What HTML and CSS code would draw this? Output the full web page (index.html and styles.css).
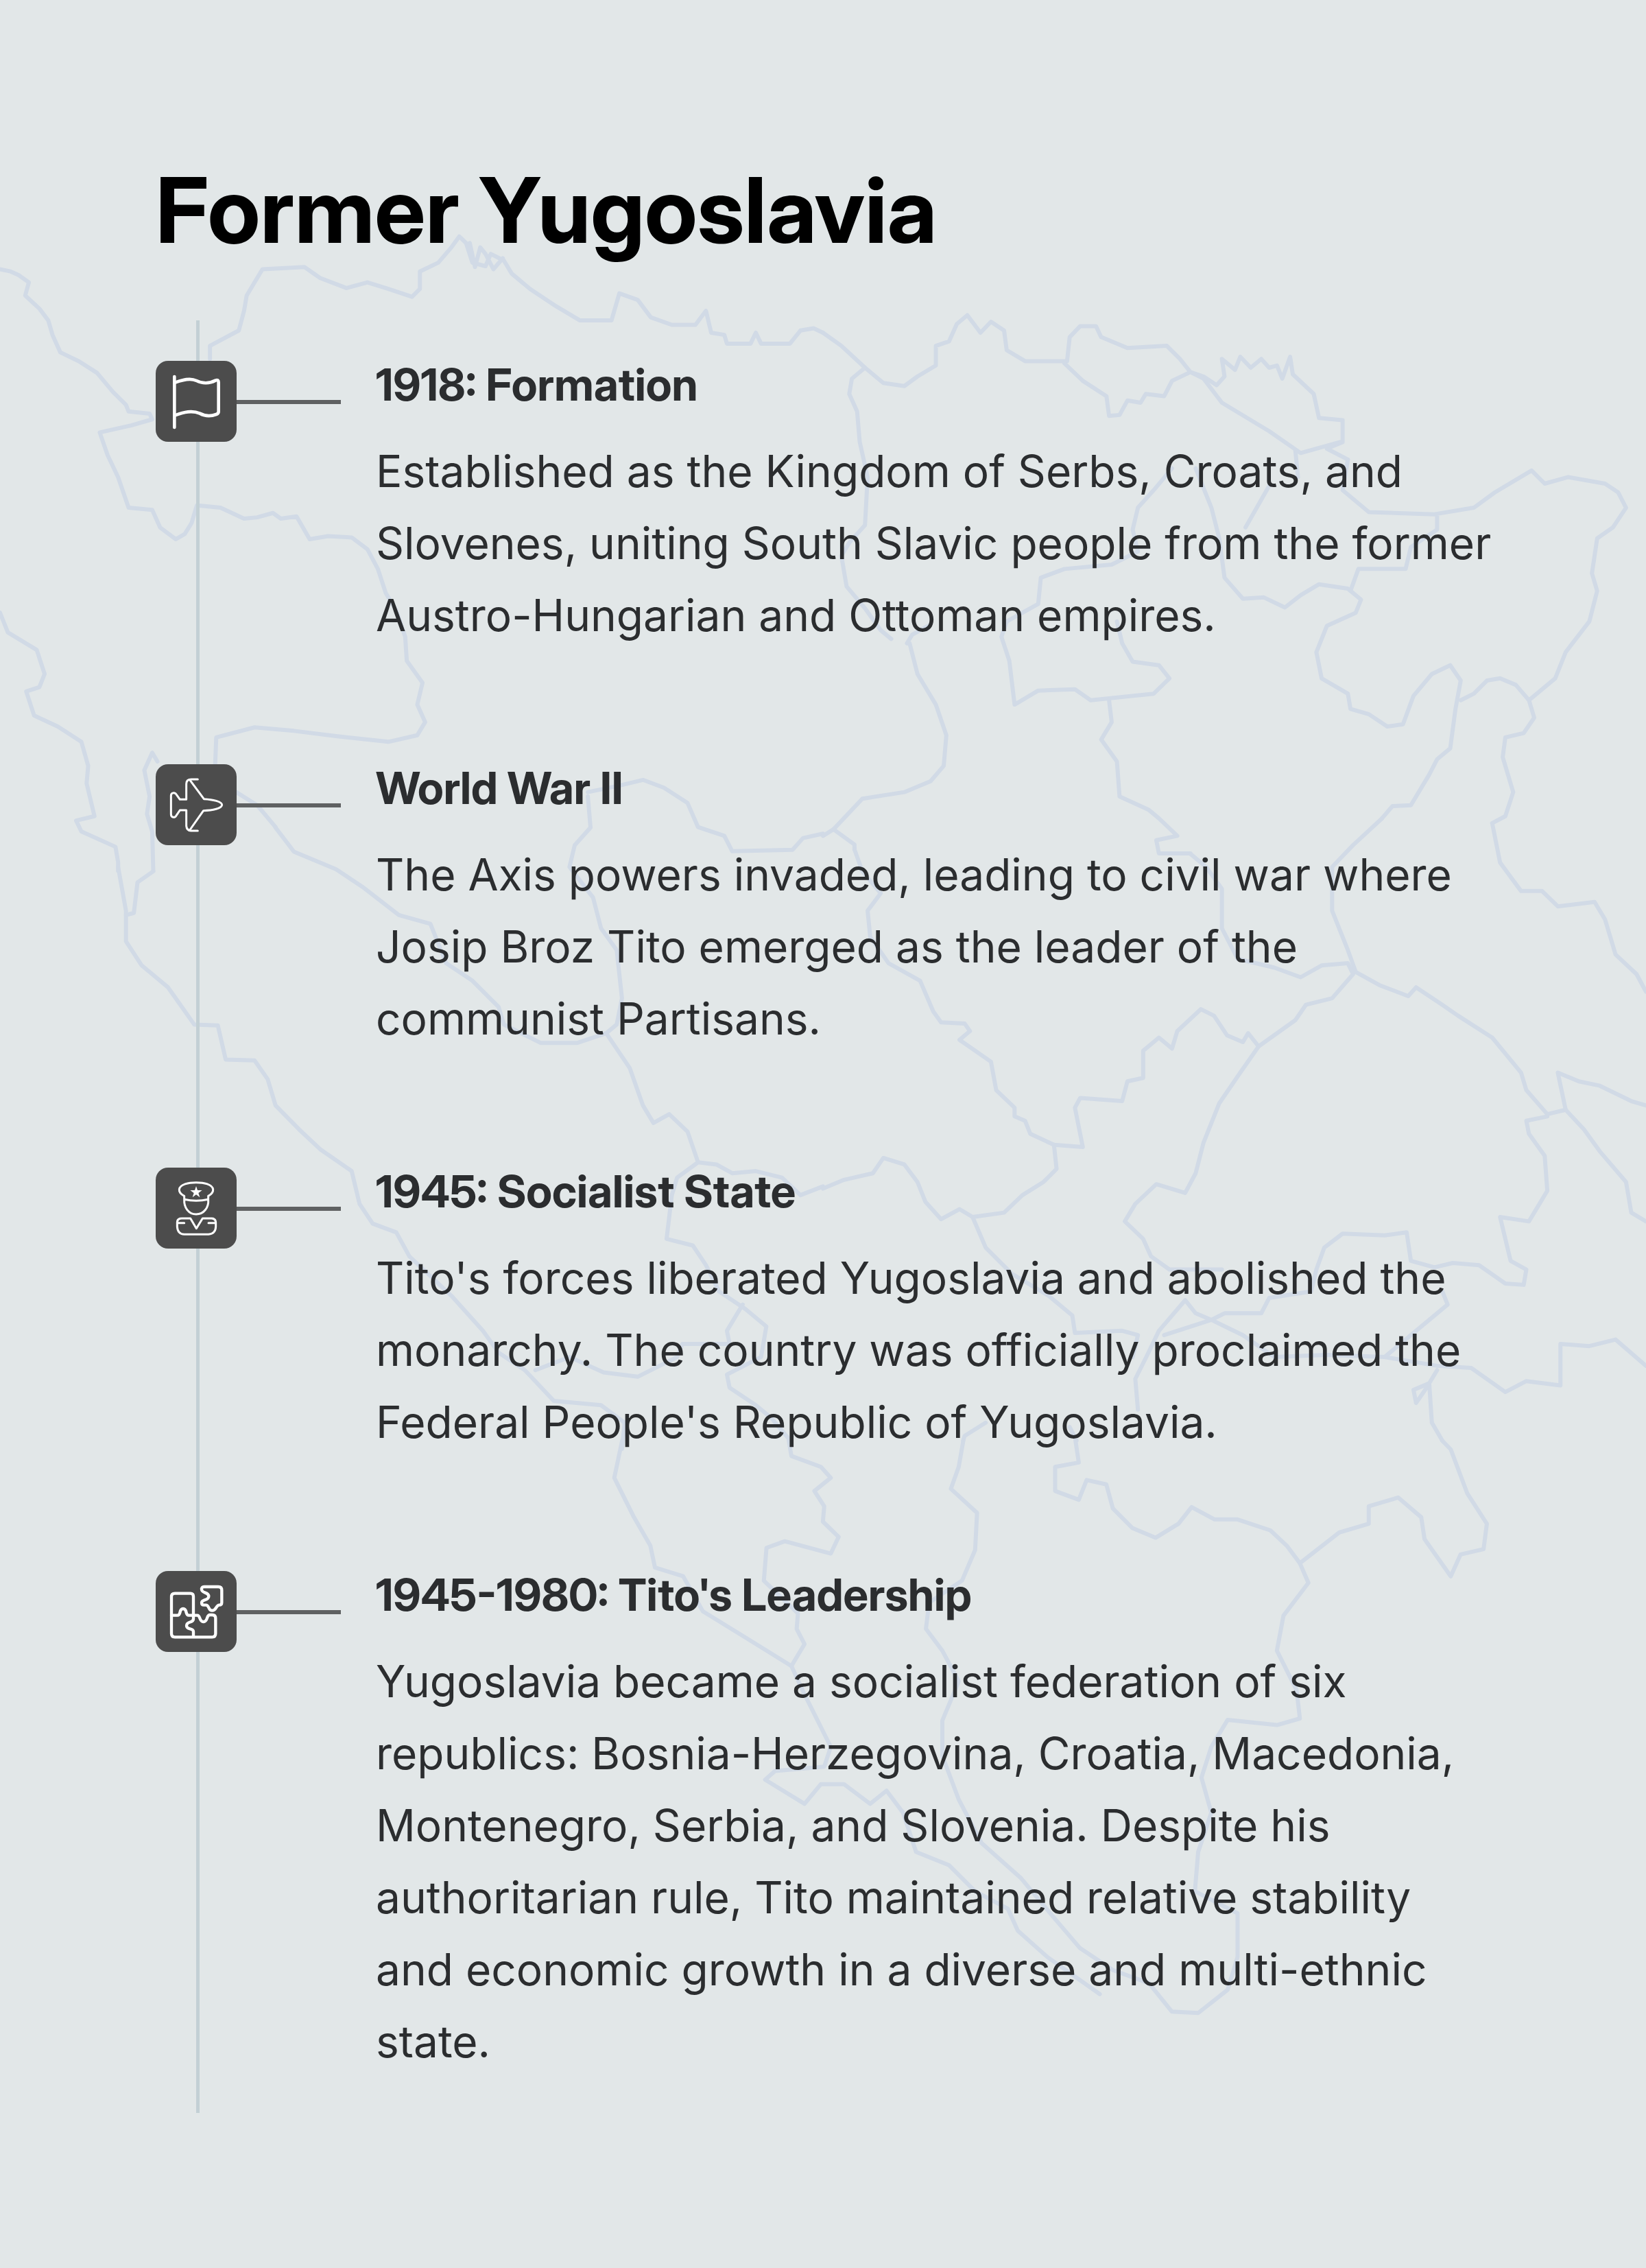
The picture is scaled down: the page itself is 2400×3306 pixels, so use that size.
FILE: index.html
```html
<!DOCTYPE html>
<html lang="en">
<head>
<meta charset="utf-8">
<meta name="viewport" content="width=device-width, initial-scale=1">
<title>Former Yugoslavia</title>
<link rel="stylesheet" href="styles.css">
</head>
<body>
<main class="page">
  <svg class="map" viewBox="0 0 2400 3306" preserveAspectRatio="xMidYMin slice" aria-hidden="true">
    <!-- north-west -->
    <g transform="translate(0 300) scale(.7653 .6378)">
      <path d="M0 145L20 150L35 158L55 175L48 205L75 235L92 262L100 295L115 335L150 355L185 382L215 425L240 455L245 470L285 475L290 488L250 502L190 518L205 570L225 620L245 690L290 695L305 735L335 762L352 750L365 725L375 685"/>
      <path d="M400 350L400 320L455 285L465 240L470 205L500 145L580 140L610 165L660 188L700 175L740 190L785 208L800 190L800 150L835 130L860 95L875 70L888 85L900 130L925 138L935 110L960 125L975 155L1010 190L1060 230L1105 262L1165 262L1180 200L1215 215L1240 255L1280 272L1325 272L1345 240L1355 290L1380 295L1385 315L1430 315L1440 290L1450 315L1505 315L1525 285L1550 280L1568 290M895 85L905 140L915 95L925 110L940 145L958 120"/>
      <path d="M380 685L420 690L465 715L490 712L520 702L535 715L565 710L590 762L625 755L670 758L700 785L720 830L735 885L755 925L772 985L775 1040L805 1090L795 1140L810 1180L795 1210L740 1225L640 1212L560 1200L485 1192L412 1215L410 1275"/>
      <path d="M0 930L15 975L70 1015L85 1070L75 1100L50 1110L65 1165L110 1190L155 1225L168 1280L165 1320L180 1395L145 1405L155 1430L220 1465L225 1500L225 1520"/>
      <path d="M300 1270L290 1250L275 1290L285 1350L280 1390L290 1430L292 1520M450 1340L490 1370L525 1420"/>
      <path d="M1120 1350L1125 1420M1120 1340L1180 1325L1225 1312L1265 1330L1310 1365L1330 1420L1380 1440L1395 1475L1510 1472L1530 1445L1568 1435"/>
    </g>
    <!-- north-east -->
    <g transform="translate(1200 300) scale(.7653 .6378)">
      <path d="M0 290L35 320L80 370L115 405L155 412L180 390L215 365L215 320L240 310L255 270L275 250L300 290L320 265L345 285L350 330L385 355L465 355L470 300L490 275L520 275L530 300L580 325L655 320L680 350L700 380L725 390L750 410L765 390L760 350L785 375L795 345L815 370L835 350L850 370L865 365L875 395L890 345L895 385L935 430L945 485L990 490L990 540L960 555L1000 580"/>
      <path d="M460 360L495 400L540 435L545 480L565 478L580 445L605 450L615 430L650 435L665 400L700 380L725 395L760 450L850 515L910 565L985 540"/>
      <path d="M80 370L55 395L50 430L65 470L70 540L85 620L80 730L50 770L35 800L45 870L80 920L110 970L130 990M160 1000L170 980L200 960M165 1000L180 1070L215 1140L235 1210L230 1280L205 1315L155 1340L75 1355L20 1425L0 1440"/>
      <path d="M665 600L630 650L600 690L590 740L600 790L550 820L460 830L415 850L410 910L350 950L340 985L355 1040L365 1140L410 1108L480 1105L510 1130L630 1115L660 1080L640 1050L590 1042L570 1000L560 950"/>
      <path d="M710 600L740 690L755 760L765 850L800 898L840 895L880 918L910 890L945 865L1000 875L1025 900L1015 930L960 960L940 1020L950 1080L1000 1115L1005 1150L1040 1162L1075 1190L1105 1185L1125 1120L1160 1070L1195 1050L1215 1085L1205 1150L1195 1240L1170 1265L1155 1300L1120 1370L1085 1372L1065 1400"/>
      <path d="M850 640L805 735M900 560L905 620M1000 580L990 650L1040 700L1165 705L1240 690L1280 655L1350 605L1375 635L1420 620L1490 635L1515 655L1530 690L1505 735L1475 760L1465 840L1475 880L1460 950L1415 1020L1395 1080L1345 1130L1355 1170L1335 1205L1300 1215L1295 1260L1315 1340L1300 1395L1275 1411M1215 1130L1240 1115L1265 1085L1290 1080L1320 1095L1345 1130M1170 705L1170 740L1120 780L1110 830L1020 830L1005 880"/>
      <path d="M545 1130L550 1180L530 1220L560 1270L565 1350L620 1380L640 1400L675 1440L635 1450L640 1480L700 1480M20 1425L60 1460L60 1471"/>
    </g>
    <!-- centre-west -->
    <g transform="translate(0 1200) scale(.7653 .6378)">
      <path d="M225 100L240 200L240 270L270 325L320 375L370 460L415 462L430 540L485 542L510 585L525 645L570 700L610 745L670 795L685 870L710 915L755 935L780 990L860 1080L920 1160L950 1210L1000 1250L1055 1320L1145 1330L1190 1370L1185 1430"/>
      <path d="M292 110L262 135L255 205L240 210M525 10L560 65L640 105L690 145L760 210L820 230L850 320L900 360L950 420L960 460L1030 502L1100 502L1155 480L1175 460L1185 400L1175 290L1145 240L1130 170L1085 100L1095 50L1125 10"/>
      <path d="M1155 480L1200 560L1225 645L1245 685L1275 665L1310 705L1330 775L1365 780L1395 800L1440 795L1490 810L1525 850L1568 830M1330 775L1290 810L1280 850L1275 900L1270 950L1320 965L1345 1010L1370 1070L1420 1110L1460 1150L1450 1220L1385 1260L1390 1290L1440 1330L1470 1360L1505 1410M1415 1100L1385 1160L1390 1190L1300 1190L1290 1220L1215 1265L1150 1255L1085 1220L1020 1250"/>
    </g>
    <!-- centre-east -->
    <g transform="translate(1200 1200) scale(.7653 .6378)">
      <path d="M60 60L75 110L110 160L85 200L90 260L125 320L185 360L210 430L225 455L270 458L280 475L260 495L320 545L330 610L365 650L365 670L385 680L395 710L440 735L495 740L480 650L490 628L570 635L580 590L610 582L610 520L640 490L665 515L675 475L720 425L745 440L770 485L800 500L810 480L830 510L900 450L920 415L970 400L1010 345L1000 320L950 325L910 352L860 330L790 310L760 240L760 150L730 100L700 70"/>
      <path d="M1065 -11L1010 50L970 100L970 200L1000 290L1015 340L1060 370L1115 395L1130 375L1180 415L1210 440L1275 490L1330 570L1340 610L1380 665L1415 655L1400 570L1440 590L1480 600L1540 635L1568 645M1275 0L1290 90L1330 155L1370 155L1400 190L1470 180L1490 220L1510 300L1550 345L1568 385"/>
      <path d="M1380 670L1340 680L1345 710L1375 760L1380 840L1345 910L1290 900L1310 1000L1340 1020L1335 1055L1300 1052L1250 1010L1200 1005L1165 1015L1120 1000L1112 935L1070 942L990 938L955 970L940 1020L930 1070L850 1085L835 1120L765 1120L740 1135L710 1120L690 1090L640 1160L620 1210L595 1270L600 1340M1415 655L1450 700L1480 750L1530 820L1540 890L1568 910"/>
      <path d="M830 510L795 570L755 640L725 730L710 800L690 845L635 825L595 870L575 910L610 950L625 990L660 1020L760 1020M440 735L445 790L420 820L380 850L345 890L285 900L260 882L225 905L195 865L180 820L155 780L115 765L95 800L40 815L0 835M285 900L310 970L360 1030L430 1080L475 1125L480 1165L570 1160L600 1170L590 1220M650 1170L740 1135L800 1170L860 1220L960 1215L1070 1220L1130 1160L1190 1100L1180 1070M1070 1220L1170 1240L1235 1245L1300 1300L1340 1275L1405 1285L1405 1190L1460 1195L1510 1180L1568 1240M1170 1250L1150 1290L1130 1325L1125 1295L1155 1280L1160 1370L1180 1411"/>
      <path d="M310 1370L270 1400L267 1411M470 1380L483 1411"/>
    </g>
    <!-- south -->
    <g transform="translate(800 2100) scale(.9566 .6378)">
      <path d="M112 0L100 85L130 175L155 240L162 290L205 310L235 390L300 450L370 515L390 580L410 640L430 700L420 745L345 755L330 775L390 830L415 785L450 785L490 830L515 800L540 850L560 940L610 970L650 1030L700 1070L715 1120L760 1180L840 1265"/>
      <path d="M366 0L370 35L415 60L430 85L405 115L420 150L418 185L442 220L430 258L360 230L332 245L328 320L380 395L378 430L390 465L370 515"/>
      <path d="M632 0L625 60L613 110L653 165L650 250L630 320L580 370L575 430L600 480L625 550L600 640L600 720L625 820L660 920L720 1000L770 1090L810 1160L860 1210L915 1240L950 1305L990 1308L1035 1255L1050 1180L1050 1080L985 1030L990 940L1010 850L995 770L1010 700L1035 638L1110 650L1145 635L1140 570L1110 480L1120 400L1158 325L1145 280L1125 240L1100 205L1050 180L1015 180L980 152L960 190L925 222L890 200L860 155L850 100L820 90L808 135L772 115L772 60L808 50L803 0"/>
      <path d="M1145 280L1205 210L1250 190L1250 150L1295 130L1330 175L1335 225L1375 310L1390 260L1425 248L1430 190L1400 120L1375 20L1362 0"/>
    </g>
  </svg>

  <h1 class="title">Former Yugoslavia</h1>

  <ol class="timeline">
    <li class="event">
      <svg class="tile" viewBox="81 78 354 354" aria-hidden="true">
        <g stroke-width="14">
          <path d="M163 147V369"/>
          <path d="M166 173C198 161 232 151 260 165C285 178 316 178 342 164Q356 158 356 172V298Q357 308 346 312C320 322 298 321 274 308C240 293 205 302 166 316"/>
        </g>
      </svg>
      <div class="connector"></div>
      <div class="copy">
        <h2 class="heading">1918: Formation</h2>
        <p class="text">Established as the Kingdom of Serbs, Croats, and Slovenes, uniting South Slavic people from the former Austro-Hungarian and Ottoman empires.</p>
      </div>
    </li>
    <li class="event">
      <svg class="tile" viewBox="81 72 354 354" aria-hidden="true">
        <g stroke-width="9">
          <path d="M265 138H237Q215 138 215 158V226H187L172 205C165 193 148 196 148 209V290C148 306 165 309 172 295L187 273H215V342Q217 362 235 363H265"/>
          <path d="M232 143L292 224C330 226 371 235 371 250C371 265 330 274 290 275L230 360"/>
        </g>
      </svg>
      <div class="connector"></div>
      <div class="copy">
        <h2 class="heading">World War II</h2>
        <p class="text">The Axis powers invaded, leading to civil war where Josip Broz Tito emerged as the leader of the communist Partisans.</p>
      </div>
    </li>
    <li class="event">
      <svg class="tile" viewBox="81 66 354 354" aria-hidden="true">
        <g stroke-width="9">
          <path d="M206 205V190C190 182 183 173 184 161C188 139 225 131 258 131C292 131 328 139 332 161C333 173 326 182 311 190V205C276 213 240 213 206 205C204 240 225 270 258 270C292 270 314 240 311 205"/>
          <path d="M233 288H195Q175 288 175 306V324Q177 357 206 358H312Q343 355 344 324V306Q343 288 325 288H286L259 332ZM178 308H206M312 308H341"/>
        </g>
        <path class="solid" d="M258 147L264 165H284L268 177L274 196L258 184L242 196L248 177L232 165H252Z"/>
      </svg>
      <div class="connector"></div>
      <div class="copy">
        <h2 class="heading">1945: Socialist State</h2>
        <p class="text">Tito's forces liberated Yugoslavia and abolished the monarchy. The country was officially proclaimed the Federal People's Republic of Yugoslavia.</p>
      </div>
    </li>
    <li class="event">
      <svg class="tile" viewBox="81 91 354 354" aria-hidden="true">
        <g stroke-width="13">
          <path d="M246 378V356C246 338 216 350 216 330C216 309 246 320 246 301V202Q246 189 233 189H165Q150 189 150 204V365Q150 380 165 380H328Q343 380 343 365V298Q343 283 328 283H317C302 284 310 313 290 313C270 313 278 285 263 285H246"/>
          <path d="M150 285H176C194 285 181 256 201 256C221 256 208 285 226 285H246"/>
          <path d="M282 172Q281 160 293 160H355Q370 160 370 175V229Q370 240 359 240C344 240 347 264 328 264C309 264 317 240 300 240H292Q282 240 282 230C282 214 313 221 313 202C313 182 283 190 282 172Z"/>
        </g>
      </svg>
      <div class="connector"></div>
      <div class="copy">
        <h2 class="heading">1945-1980: Tito's Leadership</h2>
        <p class="text">Yugoslavia became a socialist federation of six republics: Bosnia-Herzegovina, Croatia, Macedonia, Montenegro, Serbia, and Slovenia. Despite his authoritarian rule, Tito maintained relative stability and economic growth in a diverse and multi-ethnic state.</p>
      </div>
    </li>
  </ol>
</main>
</body>
</html>
```
FILE: styles.css
```css
* {
  box-sizing: border-box;
}

body {
  margin: 0;
  background: #e2e7e8;
  color: #2b2d2f;
  font-family: Inter, "Liberation Sans", sans-serif;
}

.page {
  position: relative;
  padding: 226px 222px 226px 227px;
  overflow: hidden;
}

.map {
  position: absolute;
  inset: 0;
  width: 100%;
  height: 100%;
  fill: none;
  stroke: #d1dae6;
  stroke-width: 6px;
  stroke-linejoin: round;
  stroke-linecap: round;
}

.map path {
  vector-effect: non-scaling-stroke;
}

.title,
.heading {
  font-family: "Inter Display", Inter, "Liberation Sans", sans-serif;
  font-weight: 700;
}

.title {
  position: relative;
  margin: 0 0 81px;
  color: #000;
  font-size: 132px;
  line-height: 160px;
}

.timeline {
  position: relative;
  display: flex;
  flex-direction: column;
  gap: 165px;
  margin: 0;
  padding: 59px 0 52px;
  list-style: none;
}

.timeline::before {
  content: "";
  position: absolute;
  top: 0;
  bottom: 0;
  left: 59px;
  width: 5px;
  background: #c3d0d5;
}

.event {
  position: relative;
  display: grid;
  grid-template-columns: 118px 152px 1fr;
  align-items: start;
}

.tile {
  display: block;
  width: 118px;
  height: 118px;
  border-radius: 18px;
  background: #4c4c4c;
  fill: none;
  stroke: #fff;
  stroke-linecap: round;
  stroke-linejoin: round;
}

.tile .solid {
  fill: #fff;
  stroke: none;
}

.connector {
  height: 6px;
  margin-top: 57px;
  background: #5f6162;
}

.copy {
  padding-left: 51px;
}

.heading {
  margin: 0 0 38px;
  font-size: 65px;
  line-height: 70px;
}

.text {
  margin: 0;
  font-size: 64px;
  line-height: 105px;
}
```
